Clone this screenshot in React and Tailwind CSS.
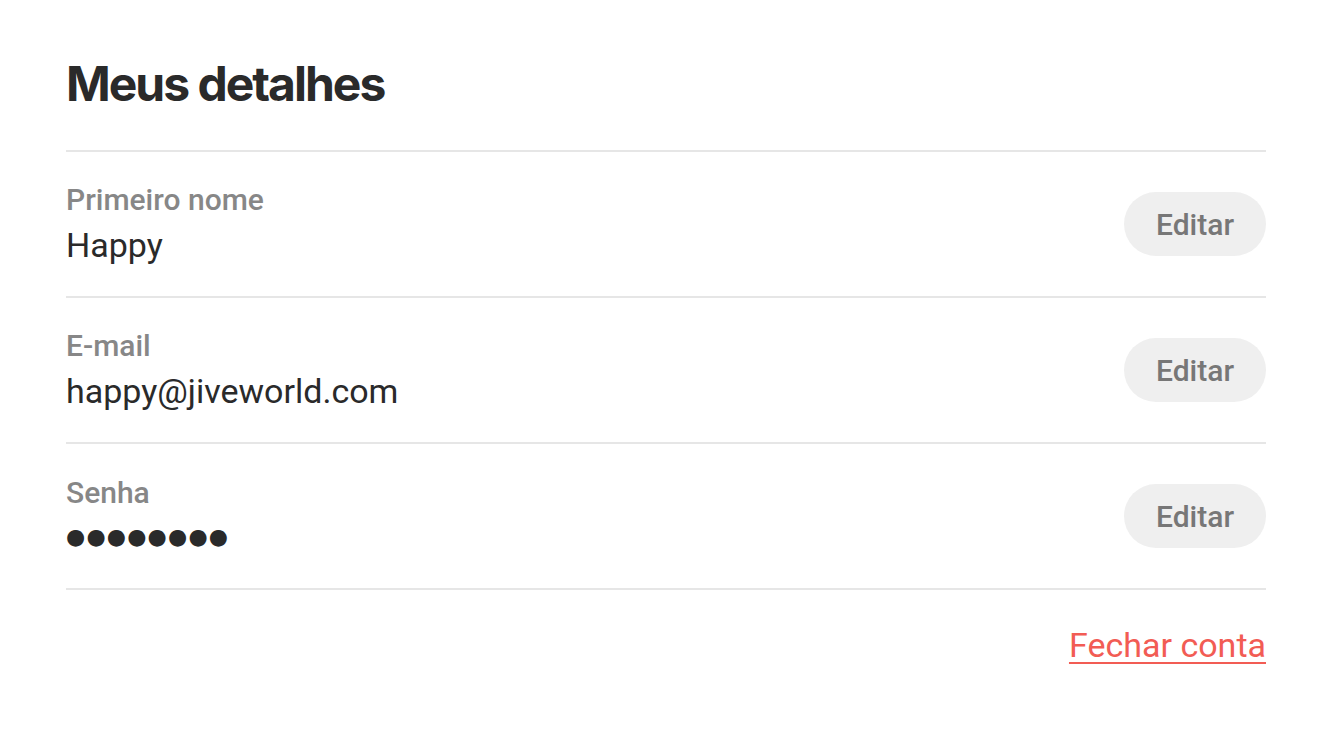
import React from "react";

// Filas del perfil
const fields = [
  { key: "name", label: "Primeiro nome", value: "Happy" },
  { key: "email", label: "E-mail", value: "happy@jiveworld.com" },
  { key: "password", label: "Senha", value: "●●●●●●●●", masked: true },
];

const DetailRow = ({ label, value, masked }) => (
  <div className="h-[146px] border-b-2 border-[#e6e6e6] flex items-center justify-between">
    <div className="flex flex-col">
      <span className="text-[30px] leading-[34px] font-medium text-[#878787]">{label}</span>
      {masked ? (
        <span className="mt-[7px] text-[22px] leading-[40px] text-[#2a2a2a] font-['DejaVu_Sans',sans-serif] tracking-[1.2px]">
          {value}
        </span>
      ) : (
        <span className="mt-[8px] text-[34px] leading-[40px] text-[#2a2a2a]">{value}</span>
      )}
    </div>
    <button className="w-[142px] h-[64px] rounded-full bg-[#efefef] text-[30px] font-medium text-[#777777]">
      Editar
    </button>
  </div>
);

export default function App() {
  return (
    <div className="min-h-screen bg-white font-['Roboto',sans-serif] px-[66px] pt-[56px]">
      <h1 className="font-['Inter',sans-serif] text-[48px] leading-[56px] font-bold tracking-[-2px] text-[#2a2a2a]">
        Meus detalhes
      </h1>
      <div className="mt-[38px] border-t-2 border-[#e6e6e6]">
        {fields.map((f) => (
          <DetailRow key={f.key} {...f} />
        ))}
      </div>
      <div className="flex justify-end mt-[35px]">
        <a href="#" className="text-[34px] leading-[40px] text-[#f25c54] underline underline-offset-[5px] decoration-2">
          Fechar conta
        </a>
      </div>
    </div>
  );
}
